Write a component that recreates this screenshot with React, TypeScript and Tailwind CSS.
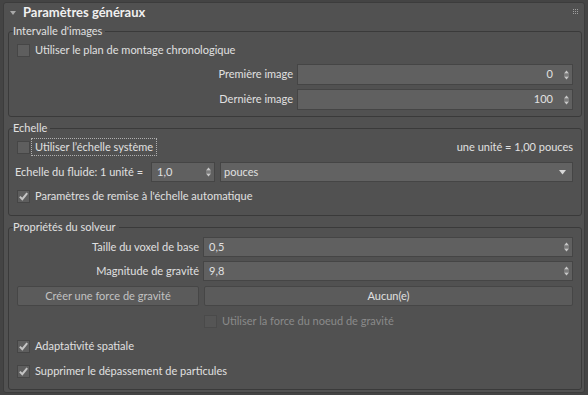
import React from "react";

function Check({ checked = false, disabled = false }: { checked?: boolean; disabled?: boolean }) {
  return (
    <span
      className={`flex h-[13px] w-[13px] shrink-0 items-center justify-center border ${
        disabled ? "border-[#4a4a4a] bg-[#555555]" : "border-[#464646] bg-[#5e5e5e]"
      }`}
    >
      {checked && (
        <svg width="11" height="11" viewBox="0 0 11 11">
          <path d="M1.8 5.6 L4.3 8.2 L9.2 2.2" fill="none" stroke="#c4c4c4" strokeWidth="2" />
        </svg>
      )}
    </span>
  );
}

function CheckRow({
  label,
  checked = false,
  disabled = false,
  focus = false,
  className = "",
}: {
  label: string;
  checked?: boolean;
  disabled?: boolean;
  focus?: boolean;
  className?: string;
}) {
  return (
    <div className={`flex h-[20px] items-center ${className}`}>
      <Check checked={checked} disabled={disabled} />
      <span
        className={`ml-[1px] whitespace-nowrap border px-[3px] leading-[16px] ${
          focus ? "border-dotted border-[#b0b0b0]" : "border-transparent"
        } ${disabled ? "text-[#8a8a8a]" : ""}`}
      >
        {label}
      </span>
    </div>
  );
}

function SpinIcon() {
  return (
    <svg width="7" height="10" viewBox="0 0 7 10" className="shrink-0">
      <polygon points="1,3.5 3.5,0.5 6,3.5" fill="#c8c8c8" />
      <rect x="1" y="4.5" width="5" height="1" fill="#9a9a9a" />
      <polygon points="1,6.5 6,6.5 3.5,9.5" fill="#c8c8c8" />
    </svg>
  );
}

function SpinInput({
  value,
  right = false,
  className = "",
  h = "h-[20px]",
}: {
  value: string;
  right?: boolean;
  className?: string;
  h?: string;
}) {
  return (
    <div
      className={`flex ${h} items-center border border-[#454545] bg-[#606060] pr-[2px] ${className}`}
    >
      {right ? (
        <span className="flex-1 pr-[10px] text-right">{value}</span>
      ) : (
        <span className="flex-1 pl-[5px]">{value}</span>
      )}
      <SpinIcon />
    </div>
  );
}

export default function App() {
  return (
    <div className="h-[395px] w-[588px] overflow-hidden bg-[#444444] pl-[3px] pt-[2px] font-['Lato',sans-serif] text-[11px] text-[#e0e0e0]">
      <div className="flex h-[391px] w-[582px] flex-col rounded-[3px] border border-[#3c3c3c] bg-[#515151]">
        {/* Header */}
        <div className="flex h-[20px] shrink-0 items-center pl-[6px] pr-[6px]">
          <svg width="6" height="4" viewBox="0 0 6 4">
            <polygon points="0,0 6,0 3,4" fill="#a8a8a8" />
          </svg>
          <span className="ml-[7px] text-[13px] font-bold text-[#f0f0f0]">Paramètres généraux</span>
          <svg width="5" height="5" viewBox="0 0 5 5" className="mb-[3px] ml-auto">
            {[0, 2, 4].map((y) =>
              [0, 2, 4].map((x) => <rect key={`${x}-${y}`} x={x} y={y} width="1" height="1" fill="#a0a0a0" />)
            )}
          </svg>
        </div>

        {/* Group 1 */}
        <fieldset className="ml-[4px] mr-[2px] mt-[1px] rounded-[3px] border border-[#3a3a3a] pb-[6px] pl-[4px] pr-[8px]">
          <legend className="pr-[3px] leading-[14px]">Intervalle d'images</legend>
          <CheckRow className="mt-[2px] pl-[4px]" label="Utiliser le plan de montage chronologique" />
          <div className="mt-[4px] flex items-center">
            <span className="w-[280px] text-right">Première image</span>
            <SpinInput h="h-[21px]" className="ml-[4px] flex-1" value="0" right />
          </div>
          <div className="mt-[4px] flex items-center">
            <span className="w-[280px] text-right">Dernière image</span>
            <SpinInput h="h-[21px]" className="ml-[4px] flex-1" value="100" right />
          </div>
        </fieldset>

        {/* Group 2 */}
        <fieldset className="ml-[4px] mr-[2px] mt-[4px] rounded-[3px] border border-[#3a3a3a] pb-[9px] pl-[4px] pr-[8px]">
          <legend className="pr-[3px] leading-[14px]">Echelle</legend>
          <div className="mt-[2px] flex items-center">
            <CheckRow className="pl-[4px]" label="Utiliser l’échelle système" focus />
            <span className="ml-auto">une unité = 1,00 pouces</span>
          </div>
          <div className="mt-[5px] flex h-[20px] items-center">
            <span className="ml-[2px] w-[136px] shrink-0 whitespace-nowrap">Echelle du fluide: 1 unité =</span>
            <SpinInput className="w-[64px]" value="1,0" />
            <div className="ml-[5px] flex h-[20px] flex-1 items-center border border-[#454545] bg-[#626262] pl-[3px] pr-[6px]">
              <span className="flex-1">pouces</span>
              <svg width="7" height="5" viewBox="0 0 7 5">
                <polygon points="0,0 7,0 3.5,4.5" fill="#d8d8d8" />
              </svg>
            </div>
          </div>
          <CheckRow className="mt-[4px] pl-[4px]" label="Paramètres de remise à l'échelle automatique" checked />
        </fieldset>

        {/* Group 3 */}
        <fieldset className="ml-[4px] mr-[2px] mt-[4px] rounded-[3px] border border-[#3a3a3a] pb-[8px] pl-[4px] pr-[8px]">
          <legend className="pr-[3px] leading-[14px]">Propriétés du solveur</legend>
          <div className="mt-[3px] flex items-center">
            <span className="w-[186px] text-right">Taille du voxel de base</span>
            <SpinInput className="ml-[4px] flex-1" value="0,5" />
          </div>
          <div className="mt-[4px] flex items-center">
            <span className="w-[186px] text-right">Magnitude de gravité</span>
            <SpinInput className="ml-[4px] flex-1" value="9,8" />
          </div>
          <div className="mt-[5px] flex h-[20px]">
            <div className="ml-[4px] flex w-[182px] items-center justify-center rounded-[2px] border border-[#464646] bg-[#5b5b5b] text-[#c2c2c2]">
              Créer une force de gravité
            </div>
            <div className="ml-[5px] flex flex-1 items-center justify-center rounded-[2px] border border-[#464646] bg-[#5b5b5b] text-[#e0e0e0]">
              Aucun(e)
            </div>
          </div>
          <CheckRow className="ml-[191px] mt-[5px]" label="Utiliser la force du noeud de gravité" disabled />
          <CheckRow className="mt-[5px] pl-[4px]" label="Adaptativité spatiale" checked />
          <CheckRow className="mt-[5px] pl-[4px]" label="Supprimer le dépassement de particules" checked />
        </fieldset>
      </div>
    </div>
  );
}
